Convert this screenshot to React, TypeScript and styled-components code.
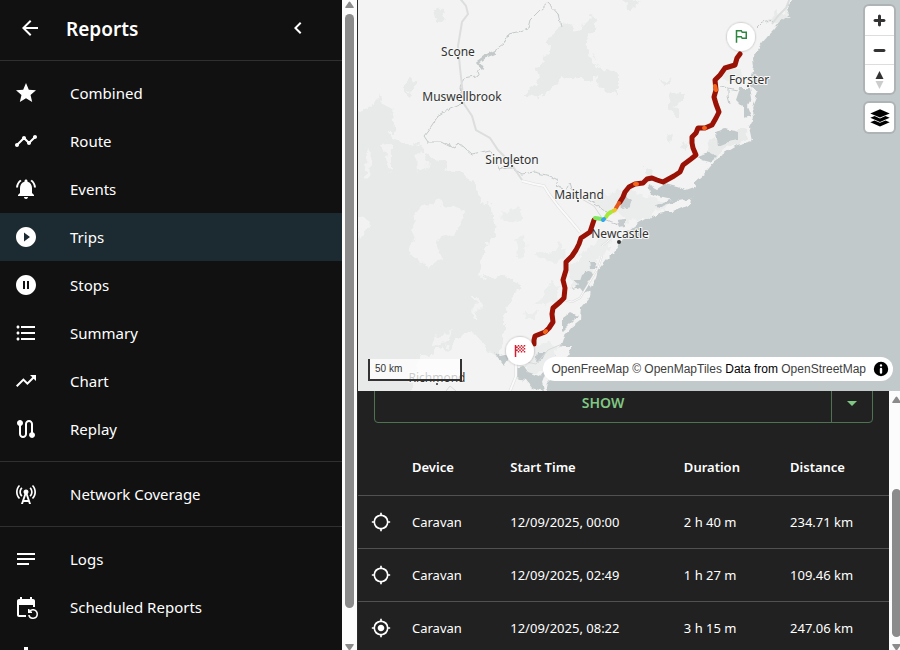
import React from 'react';
import styled, { createGlobalStyle } from 'styled-components';
import {
  MdArrowBack,
  MdChevronLeft,
  MdStar,
  MdTimeline,
  MdNotificationsActive,
  MdPlayCircleFilled,
  MdPauseCircleFilled,
  MdFormatListBulleted,
  MdTrendingUp,
  MdRoute,
  MdCellTower,
  MdNotes,
  MdEventRepeat,
  MdBarChart,
  MdLocationSearching,
  MdGpsFixed,
  MdArrowDropDown,
} from 'react-icons/md';
import type { IconType } from 'react-icons';

const GlobalStyle = createGlobalStyle`
  *, *::before, *::after { box-sizing: border-box; }
  body {
    margin: 0;
    overflow: hidden;
    background: #111111;
    color: #ffffff;
    font-family: "Noto Sans", "Open Sans", sans-serif;
  }
  button { font: inherit; color: inherit; background: none; border: 0; padding: 0; cursor: pointer; }
  a { color: inherit; text-decoration: none; }
`;

const Page = styled.div`
  display: flex;
  height: 100vh;
  overflow: hidden;
`;

/* ---------- Sidebar ---------- */

const Sidebar = styled.aside`
  display: flex;
  flex: 0 0 358px;
  min-width: 0;
  border-right: 1px solid #2a2a2a;
  overflow: hidden;
`;

const SidebarContent = styled.div`
  flex: 1;
  min-width: 0;
  overflow: hidden;
  background: #111111;
`;

const SidebarHeader = styled.header`
  display: flex;
  align-items: center;
  height: 61px;
  padding: 0 32px 4px 18px;
  border-bottom: 1px solid #303030;
`;

const Title = styled.h1`
  flex: 1;
  margin: 0 0 0 24px;
  padding-top: 2px;
  font-size: 19px;
  line-height: 28px;
  font-weight: 600;
`;

const IconButton = styled.button<{ $size: number }>`
  display: flex;
  align-items: center;
  justify-content: center;
  width: ${(p) => p.$size}px;
  height: ${(p) => p.$size}px;
  svg {
    width: ${(p) => p.$size}px;
    height: ${(p) => p.$size}px;
  }
`;

const NavList = styled.ul`
  list-style: none;
  margin: 0;
  padding: 8px 0;
  & + & {
    border-top: 1px solid #303030;
  }
`;

const NavLink = styled.a<{ $selected: boolean }>`
  display: flex;
  align-items: center;
  height: 48px;
  padding: 0 14px;
  gap: 32px;
  font-size: 15px;
  line-height: 24px;
  background: ${(p) => (p.$selected ? '#1c2a31' : 'transparent')};
  svg {
    width: 24px;
    height: 24px;
    flex: none;
  }
`;

/* ---------- Scrollbar ---------- */

const ScrollTrack = styled.div<{ $width: number }>`
  display: flex;
  flex-direction: column;
  flex: 0 0 ${(p) => p.$width}px;
  padding: 0 3px;
  background: #fcfcfc;
  overflow: hidden;
`;

const ScrollSpace = styled.div<{ $grow: number }>`
  flex: ${(p) => p.$grow} 1 0;
`;

const ScrollThumb = styled.div<{ $grow: number }>`
  flex: ${(p) => p.$grow} 1 0;
  width: 9px;
  border-radius: 5px;
  background: #8b8b8b;
`;

const ScrollArrow = styled.svg`
  display: block;
  flex: none;
  width: 9px;
  height: 8px;
  fill: #8b8b8b;
`;

type ScrollbarProps = { width: number; top: number; before: number; thumb: number; after: number };

const ScrollTop = styled.div<{ $pad: number }>`
  padding-top: ${(p) => p.$pad}px;
`;

function Scrollbar({ width, top, before, thumb, after }: ScrollbarProps) {
  return (
    <ScrollTrack $width={width} aria-hidden="true">
      <ScrollTop $pad={top}>
        <ScrollArrow viewBox="0 0 9 8">
          <path d="M3.6 1.2Q4.5 0 5.4 1.2L8.7 6Q9.2 7 8.2 7H.8Q-.2 7 .3 6Z" />
        </ScrollArrow>
      </ScrollTop>
      <ScrollSpace $grow={before} />
      <ScrollThumb $grow={thumb} />
      <ScrollSpace $grow={after} />
      <ScrollArrow viewBox="0 0 9 8">
        <path d="M3.6 7.8Q4.5 9 5.4 7.8L8.7 3Q9.2 2 8.2 2H.8Q-.2 2 .3 3Z" />
      </ScrollArrow>
    </ScrollTrack>
  );
}

/* ---------- Map ---------- */

const Main = styled.main`
  display: flex;
  flex-direction: column;
  flex: 1;
  min-width: 0;
`;

const MapPane = styled.section`
  position: relative;
  flex: 0 0 calc(60vh + 1px);
  overflow: hidden;
  background: #c2c9cb;
`;

const MapCanvas = styled.svg`
  display: block;
  width: 100%;
  height: 100%;
`;

const MapControls = styled.div`
  position: absolute;
  top: 6px;
  right: 6px;
  display: flex;
  flex-direction: column;
  gap: 10px;
`;

const ControlGroup = styled.div`
  width: 29px;
  border-radius: 4px;
  background: #ffffff;
  box-shadow: 0 0 0 2px rgba(0, 0, 0, 0.1);
  overflow: hidden;
`;

const ControlButton = styled.button`
  display: flex;
  align-items: center;
  justify-content: center;
  width: 29px;
  height: 29px;
  & + & {
    border-top: 1px solid #dddddd;
  }
`;

const Scale = styled.div`
  position: absolute;
  left: 10px;
  bottom: 10px;
  width: 94px;
  height: 22px;
  padding: 0 5px;
  border: 2px solid #333333;
  border-top: 0;
  background: rgba(255, 255, 255, 0.75);
  color: #333333;
  font: 10px/19px "Liberation Sans", Arial, sans-serif;
`;

const Attribution = styled.div`
  position: absolute;
  right: 7px;
  bottom: 10px;
  display: flex;
  align-items: center;
  gap: 3px;
  height: 24px;
  padding-left: 8px;
  border-radius: 12px;
  background: #ffffff;
  color: #000000;
  font: 12px/20px "Liberation Sans", Arial, sans-serif;
  white-space: nowrap;
  a { color: #404040; }
`;

const toRoad = (d: string, w: number) => (
  <>
    <path d={d} stroke="#dcdedd" strokeWidth={w + 1} />
    <path d={d} stroke="#fafafa" strokeWidth={w} />
  </>
);

const PLACES = [
  { name: 'Scone', x: 100, y: 56, dot: [100, 58] },
  { name: 'Muswellbrook', x: 104, y: 101, dot: [104, 103] },
  { name: 'Singleton', x: 154, y: 164, dot: [154, 166] },
  { name: 'Maitland', x: 221, y: 199, dot: [220, 201] },
  { name: 'Forster', x: 391, y: 84, dot: [390, 86] },
  { name: 'Newcastle', x: 262, y: 238, dot: [261, 242] },
  { name: 'Richmond', x: 79, y: 382, dot: [79, 384] },
];

function TripMap() {
  return (
    <MapCanvas viewBox="0 0 542 391" preserveAspectRatio="xMidYMid slice" role="img" aria-label="Trip map">
      <defs>
        <filter id="rough" x="-5%" y="-5%" width="110%" height="110%">
          <feTurbulence type="fractalNoise" baseFrequency="0.09" numOctaves="3" seed="4" result="n" />
          <feDisplacementMap in="SourceGraphic" in2="n" scale="16" xChannelSelector="R" yChannelSelector="G" />
        </filter>
        <filter id="shore" x="-5%" y="-5%" width="110%" height="110%">
          <feTurbulence type="fractalNoise" baseFrequency="0.15" numOctaves="2" seed="9" result="n" />
          <feDisplacementMap in="SourceGraphic" in2="n" scale="5" xChannelSelector="R" yChannelSelector="G" />
        </filter>
        <filter id="pin" x="-30%" y="-30%" width="160%" height="160%">
          <feDropShadow dx="0" dy="0" stdDeviation="1.2" floodColor="#000000" floodOpacity="0.35" />
        </filter>
      </defs>

      <rect width="542" height="391" fill="#c2c9cb" />

      <g filter="url(#shore)">
        <path
          fill="#f2f3f2"
          d="M-20 -20H440L434 0L429 10L431 15L422 22L416 30L409 37L400 48L395 58L396 66L394 75L392 86L399 92L397 100L394 107L396 117L391 127L394 141L379 145L362 155L352 167L347 173L335 183L340 190L338 196L332 199L331 205L325 208L315 212L305 212L289 218L280 223L267 233L263 242L255 253L248 260L240 270L238 277L233 287L232 297L223 307L222 320L213 327L208 333L203 347L195 357L192 368L198 375L190 383L186 400H-20Z"
        />
      </g>

      <g fill="#e7eae8" filter="url(#rough)">
        <path d="M-20 112L6 110L20 98L34 108L36 126L30 134L46 142L62 146L78 160L98 170L114 182L120 197L133 203L137 230L129 250L124 262L122 280L146 274L163 287L150 303L146 320L146 345L136 354L113 330L84 350L60 357L50 400L-20 400Z" />
        <path d="M74 10L84 6L88 14L84 24L76 20Z" />
        <path d="M194 30L206 24L220 30L234 16L240 18L228 46L236 64L250 72L260 76L260 96L248 90L236 78L216 78L198 82L184 98L168 94L180 82L178 68L188 58L190 44Z" />
        <path d="M262 -2L278 0L274 8Z" />
        <path d="M48 86L56 80L56 92L48 96Z" />
        <path d="M314 94L324 92L324 106L318 114L312 112Z" />
        <path d="M300 78L312 80L304 84Z" />
        <path d="M308 136L314 134L312 144Z" />
        <path d="M286 168L294 166L292 176L286 174Z" />
        <path d="M346 146L372 128L388 130L390 140L372 146L354 158Z" />
        <path d="M320 148L330 144L328 152Z" />
        <path d="M404 22L424 10L430 16L418 24Z" />
      </g>
      <g fill="#ebedec" filter="url(#rough)">
        <path d="M142 212L160 208L166 218L156 224L146 220Z" />
        <path d="M158 238L166 234L168 254L160 256Z" />
        <path d="M176 254L196 250L202 240L206 256L196 264L180 262Z" />
        <path d="M184 290L202 282L202 300L188 308L178 304Z" />
        <path d="M166 312L178 312L176 320L168 320Z" />
        <path d="M212 262L234 246L246 232L254 240L240 262L228 280L212 288Z" />
        <path d="M236 196L262 190L290 198L318 202L300 210L284 218L270 222L240 206Z" />
        <path d="M364 66L382 70L388 80L366 82Z" />
        <path d="M168 354L194 338L198 352L184 370L168 376Z" />
      </g>
      <g fill="#f1f2f1" filter="url(#rough)">
        <path d="M60 213L77 200L107 208L100 230L80 242L82 260L60 265L50 253L55 230Z" />
        <path d="M-4 214L10 216L12 226L0 240Z" />
        <path d="M24 145L34 144L34 172L28 166Z" />
        <path d="M8 154L14 150L12 176L6 182Z" />
        <path d="M58 152L68 150L70 166L60 172Z" />
        <path d="M117 296L121 296L120 322L116 320Z" />
        <path d="M72 336L94 334L88 344L76 348Z" />
      </g>

      <g fill="#c2c9cb" filter="url(#shore)">
        <path d="M382 88L392 88L394 98L390 106L394 116L386 118L386 108L378 100Z" />
        <path d="M358 132L366 128L380 132L380 140L370 142L360 146Z" />
        <path d="M340 156L350 152L358 156L352 162L344 160Z" />
        <path d="M290 184L299 189L307 184L319 187L328 190L342 185L342 195L332 199L322 201L310 199L300 197L292 193Z" />
        <path d="M262 200L268 196L274 200L272 206L264 208Z" fill="#c6cbcd" />
        <path d="M259 220L267 219L267 227L261 228Z" fill="#c6cbcd" />
        <path d="M231 262L237 262L238 268L232 268Z" />
        <path d="M224 274L232 270L236 276L230 282L234 290L226 293L222 288L214 290L220 284L215 280L222 280Z" />
        <path d="M204 318L212 312L220 316L212 324L204 332Z" />
        <path d="M136 352L142 356L152 354L156 360L150 360L146 366Z" />
        <path d="M158 368L166 366L170 372L182 376L190 366L184 382L186 391L174 388L168 380L158 378Z" />
        <path d="M180 352L188 352L184 360L178 362Z" />
        <path d="M196 352L206 346L214 346L210 356L198 364Z" fill="#f2f3f2" />
        <path d="M298 205L326 195L320 200L300 208Z" />
      </g>

      <g fill="none" stroke="#c3c8c9" filter="url(#shore)">
        <path d="M203 26L200 14L190 3L182 10L172 20L170 28L160 32L150 34L146 44L138 50L126 56" strokeWidth="1" />
        <path d="M138 52L128 56L120 62L126 70" strokeWidth="3" />
        <path d="M122 70L118 76L106 78L102 88L104 102" strokeWidth="1" />
        <path d="M104 104L90 110L80 116L72 128L66 136L70 142L84 142L96 148L100 142L114 154L132 150L138 160L142 170L148 168L154 168L164 174L176 172L192 176L200 180L198 186L208 190L212 182L214 190" strokeWidth="1" />
        <path d="M398 28L404 22L412 20L416 24" strokeWidth="1" />
        <path d="M362 86L370 88L370 96L372 104M370 88L380 90" strokeWidth="1" />
        <path d="M214 190L224 196L240 206L248 212M240 216L254 222L260 224" strokeWidth="1" />
      </g>

      <g fill="none" stroke="#dcdedd" strokeWidth="2">
        <path d="M100 -4L108 6L110 14L104 22L100 46L102 68L104 86L106 104L114 116L118 130L132 138L140 150L152 162L160 174L164 180" />
        <path d="M432 -2L428 8L420 16L414 24" />
      </g>
      <g fill="none" strokeLinejoin="round">
        {toRoad('M164 181L176 184L186 186L191 194L200 206L212 220L222 232', 2)}
        {toRoad('M256 236L244 246L244 256L240 268L228 288L222 298L214 302L206 300', 1)}
        {toRoad('M158 364L158 376L152 391', 2)}
        <path d="M222 198L236 206L244 218M206 296L196 304M204 344L190 350L178 364L168 362M88 391L92 386L98 391" stroke="#d9dbdb" strokeWidth="1" />
      </g>

      <g
        fill="#333333"
        stroke="#f6f7f6"
        strokeWidth="2"
        paintOrder="stroke"
        textAnchor="middle"
        fontFamily='"Noto Sans", sans-serif'
        fontSize="12"
      >
        {PLACES.map((p) => (
          <g key={p.name}>
            <text x={p.x} y={p.y}>{p.name}</text>
            <circle cx={p.dot[0]} cy={p.dot[1]} r={p.name === 'Newcastle' ? 2 : 1} stroke="none" />
          </g>
        ))}
      </g>

      <g fill="none" stroke="#9a1105" strokeWidth="5" strokeLinecap="round" strokeLinejoin="round">
        <path d="M382 54L379 58L377 65L367 68L362 75L357 80L358 90L356 97L358 104L361 112L358 118L354 125L347 128L340 128L338 133L334 137L334 143L335 148L338 155L333 159L325 165L322 172L316 176L305 182L299 180L294 178L289 179L285 183L277 184L271 187L267 192L265 197L262 202" />
        <path d="M236 220L234 226L232 232L223 238L221 244L218 250L214 256L208 262L208 270L205 280L207 288L206 298L202 302L195 308L194 314L195 322L191 328L187 332L177 336L176 340L176 344" />
        <g strokeWidth="4">
          <path d="M357 86L358 90M346 128L347 128M277 184L279 184M187 332L188 331" stroke="#f4661c" />
          <path d="M261 203L258 208" stroke="#e8571a" />
          <path d="M237 218L243 219" stroke="#7fe860" />
          <path d="M257 210L255 211" stroke="#e8c62c" />
          <path d="M253 212L250 214L248 217" stroke="#a8e83a" />
          <path d="M246 219L245 220" stroke="#35a5ee" />
        </g>
      </g>

      <g>
        <circle cx="383" cy="37" r="14" fill="#ffffff" filter="url(#pin)" />
        <path
          transform="translate(374 27) scale(.75)"
          fill="#2e8540"
          d="M14 6l-1-2H5v17h2v-7h5l1 2h7V6h-6zm4 8h-4l-1-2H7V6h5l1 2h5v6z"
        />
        <circle cx="162" cy="351" r="14" fill="#ffffff" filter="url(#pin)" />
        <path
          transform="translate(153 342) scale(.75)"
          fill="#cf2030"
          d="M11 6H9V4h2v2zm4-2h-2v2h2V4zM9 14h2v-2H9v2zm10-4V8h-2v2h2zm0 4v-2h-2v2h2zm-6 0h2v-2h-2v2zm6-10h-2v2h2V4zm-6 4V6h-2v2h2zm-6 2V8h2V6H7V4H5v16h2v-8h2v-2H7zm8 2h2v-2h-2v2zm-4-2v2h2v-2h-2zm-2-2v2h2V8H9zm4 2h2V8h-2v2zm2-4v2h2V6h-2z"
        />
      </g>
    </MapCanvas>
  );
}

/* ---------- Results ---------- */

const Results = styled.section`
  display: flex;
  flex: 1;
  min-height: 0;
  background: #212121;
  overflow: hidden;
`;

const ResultsContent = styled.div`
  flex: 1;
  min-width: 0;
  overflow: hidden;
`;

const SplitButton = styled.div`
  display: flex;
  height: 40px;
  margin: -8px 16px 16px;
  border: 1px solid #4f7352;
  border-radius: 4px;
  color: #81c784;
`;

const ShowButton = styled.button`
  flex: 1;
  font-size: 14px;
  line-height: 24px;
  font-weight: 600;
`;

const CaretButton = styled.button`
  display: flex;
  align-items: center;
  justify-content: center;
  width: 41px;
  border-left: 1px solid #4f7352;
  svg {
    width: 24px;
    height: 24px;
  }
`;

const Table = styled.table`
  width: 100%;
  border-collapse: separate;
  border-spacing: 0;
  table-layout: fixed;
  font-size: 13px;
  line-height: 20px;
`;

const HeadCell = styled.th<{ $width?: string }>`
  width: ${(p) => p.$width ?? 'auto'};
  height: 57px;
  padding: 0 0 0 16px;
  border-bottom: 1px solid #515151;
  text-align: left;
  font-weight: 600;
  white-space: nowrap;
`;

const Cell = styled.td<{ $icon?: boolean }>`
  height: 53px;
  padding: 0 0 0 ${(p) => (p.$icon ? 13 : 16)}px;
  border-bottom: 1px solid #515151;
  white-space: nowrap;
`;

type Item = { label: string; icon: IconType };

const SECTIONS: Item[][] = [
  [
    { label: 'Combined', icon: MdStar },
    { label: 'Route', icon: MdTimeline },
    { label: 'Events', icon: MdNotificationsActive },
    { label: 'Trips', icon: MdPlayCircleFilled },
    { label: 'Stops', icon: MdPauseCircleFilled },
    { label: 'Summary', icon: MdFormatListBulleted },
    { label: 'Chart', icon: MdTrendingUp },
    { label: 'Replay', icon: MdRoute },
  ],
  [{ label: 'Network Coverage', icon: MdCellTower }],
  [
    { label: 'Logs', icon: MdNotes },
    { label: 'Scheduled Reports', icon: MdEventRepeat },
    { label: 'Statistics', icon: MdBarChart },
  ],
];

const TRIPS = [
  { device: 'Caravan', start: '12/09/2025, 00:00', duration: '2 h 40 m', distance: '234.71 km', active: false },
  { device: 'Caravan', start: '12/09/2025, 02:49', duration: '1 h 27 m', distance: '109.46 km', active: false },
  { device: 'Caravan', start: '12/09/2025, 08:22', duration: '3 h 15 m', distance: '247.06 km', active: true },
];

export default function App() {
  return (
    <>
      <GlobalStyle />
      <Page>
        <Sidebar>
          <SidebarContent>
            <SidebarHeader>
              <IconButton $size={24} aria-label="Back"><MdArrowBack /></IconButton>
              <Title>Reports</Title>
              <IconButton $size={24} aria-label="Collapse menu"><MdChevronLeft /></IconButton>
            </SidebarHeader>
            <nav aria-label="Reports">
              {SECTIONS.map((section) => (
                <NavList key={section[0].label}>
                  {section.map(({ label, icon: Icon }) => (
                    <li key={label}>
                      <NavLink
                        href="#"
                        $selected={label === 'Trips'}
                        aria-current={label === 'Trips' ? 'page' : undefined}
                      >
                        <Icon aria-hidden="true" />
                        {label}
                      </NavLink>
                    </li>
                  ))}
                </NavList>
              ))}
            </nav>
          </SidebarContent>
          <Scrollbar width={15} top={1} before={5} thumb={594} after={34} />
        </Sidebar>

        <Main>
          <MapPane>
            <TripMap />
            <MapControls>
              <ControlGroup>
                <ControlButton aria-label="Zoom in">
                  <svg width="29" height="29" viewBox="0 0 29 29" fill="#333333">
                    <path d="M14.5 8.5c-.75 0-1.5.75-1.5 1.5v3h-3c-.75 0-1.5.75-1.5 1.5S9.25 16 10 16h3v3c0 .75.75 1.5 1.5 1.5S16 19.75 16 19v-3h3c.75 0 1.5-.75 1.5-1.5S19.75 13 19 13h-3v-3c0-.75-.75-1.5-1.5-1.5z" />
                  </svg>
                </ControlButton>
                <ControlButton aria-label="Zoom out">
                  <svg width="29" height="29" viewBox="0 0 29 29" fill="#333333">
                    <path d="M10 13c-.75 0-1.5.75-1.5 1.5S9.25 16 10 16h9c.75 0 1.5-.75 1.5-1.5S19.75 13 19 13h-9z" />
                  </svg>
                </ControlButton>
                <ControlButton aria-label="Reset bearing to north">
                  <svg width="29" height="29" viewBox="0 0 29 29" fill="#333333">
                    <path d="M10.5 14l4-8 4 8h-8z" />
                    <path d="M10.5 16l4 8 4-8h-8z" fill="#cccccc" />
                  </svg>
                </ControlButton>
              </ControlGroup>
              <ControlGroup>
                <ControlButton aria-label="Map layers">
                  <svg width="20" height="18" viewBox="0 0 20 18" fill="#000000">
                    <path d="M10 .3L19.7 4.4L10 8.4L.3 4.4Z" />
                    <path d="M.3 8.8L4.6 7L10 9.4L15.4 7L19.7 8.8L10 12.9Z" />
                    <path d="M.3 13.2L4.6 11.4L10 13.8L15.4 11.4L19.7 13.2L10 17.4Z" />
                  </svg>
                </ControlButton>
              </ControlGroup>
            </MapControls>
            <Scale>50 km</Scale>
            <Attribution>
              <span>
                <a href="#">OpenFreeMap</a> <a href="#">© OpenMapTiles</a> Data from <a href="#">OpenStreetMap</a>
              </span>
              <IconButton $size={24} aria-label="Toggle attribution">
                <svg viewBox="0 0 20 20" fillRule="evenodd" fill="#000000">
                  <path d="M4 10a6 6 0 1 0 12 0 6 6 0 1 0-12 0m5-3a1 1 0 1 0 2 0 1 1 0 1 0-2 0m0 3a1 1 0 1 1 2 0v3a1 1 0 1 1-2 0" />
                </svg>
              </IconButton>
            </Attribution>
          </MapPane>

          <Results>
            <ResultsContent>
              <SplitButton>
                <ShowButton>SHOW</ShowButton>
                <CaretButton aria-label="More actions"><MdArrowDropDown /></CaretButton>
              </SplitButton>
              <Table>
                <thead>
                  <tr>
                    <HeadCell $width="38px" aria-label="Show on map" />
                    <HeadCell $width="18.5%">Device</HeadCell>
                    <HeadCell $width="32.7%">Start Time</HeadCell>
                    <HeadCell $width="20%">Duration</HeadCell>
                    <HeadCell>Distance</HeadCell>
                  </tr>
                </thead>
                <tbody>
                  {TRIPS.map((t) => (
                    <tr key={t.start}>
                      <Cell $icon>
                        <IconButton $size={20} aria-label={t.active ? 'Hide trip' : 'Show trip'}>
                          {t.active ? <MdGpsFixed /> : <MdLocationSearching />}
                        </IconButton>
                      </Cell>
                      <Cell>{t.device}</Cell>
                      <Cell>{t.start}</Cell>
                      <Cell>{t.duration}</Cell>
                      <Cell>{t.distance}</Cell>
                    </tr>
                  ))}
                </tbody>
              </Table>
            </ResultsContent>
            <Scrollbar width={11} top={5} before={85} thumb={148} after={5} />
          </Results>
        </Main>
      </Page>
    </>
  );
}
